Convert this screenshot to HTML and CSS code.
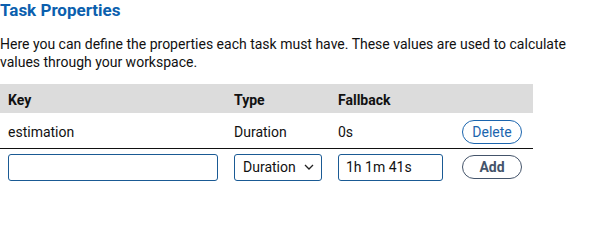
FILE: index.html
```html
<!DOCTYPE html>
<html lang="en">
<head>
    <meta charset="UTF-8">
    <title>Task Properties</title>
    <link rel="stylesheet" href="styles.css">
</head>
<body>
    <h2 class="title">Task Properties</h2>
    <p class="intro">Here you can define the properties each task must have. These values are used to calculate values through your workspace.</p>

    <table class="props">
        <colgroup>
            <col class="col-key">
            <col class="col-type">
            <col class="col-fallback">
            <col class="col-action">
        </colgroup>
        <thead>
            <tr>
                <th>Key</th>
                <th>Type</th>
                <th>Fallback</th>
                <th></th>
            </tr>
        </thead>
        <tbody>
            <tr class="existing">
                <td>estimation</td>
                <td>Duration</td>
                <td>0s</td>
                <td><button class="pill delete">Delete</button></td>
            </tr>
            <tr class="new-row">
                <td><input type="text" class="field key-field"></td>
                <td>
                    <div class="select-box">
                        <span>Duration</span>
                        <svg width="10" height="6" viewBox="0 0 10 6"><path d="M1 1l4 4 4-4" fill="none" stroke="#222" stroke-width="1.3"/></svg>
                    </div>
                </td>
                <td><input type="text" class="field fallback-field" value="1h 1m 41s"></td>
                <td><button class="pill add">Add</button></td>
            </tr>
        </tbody>
    </table>
</body>
</html>
```

FILE: styles.css
```css
body {
    margin: 0;
    font-family: Roboto, "Liberation Sans", sans-serif;
    font-size: 14px;
    color: #111;
    background: #fff;
}
.title {
    margin: 0;
    font-size: 17px;
    line-height: 20px;
    font-weight: bold;
    color: #0b5fae;
}
.intro {
    margin: 15px 0 0 0;
    line-height: 18px;
    width: 580px;
}

/* テーブル */
.props {
    margin-top: 13px;
    border-collapse: collapse;
    table-layout: fixed;
    width: 533px;
}
.col-key { width: 226px; }
.col-type { width: 104px; }
.col-fallback { width: 124px; }
.col-action { width: 79px; }

.props th {
    background: #dcdcdc;
    text-align: left;
    font-weight: bold;
    height: 27px;
    padding: 2px 8px 0 8px;
}
.props td {
    padding: 0 8px;
}
.existing td {
    height: 33px;
    padding-top: 2px;
    border-bottom: 1px solid #111;
}
.new-row td {
    height: 36px;
}

.field {
    box-sizing: border-box;
    width: 100%;
    height: 27px;
    border: 1px solid #1a5a94;
    border-radius: 3px;
    font-family: inherit;
    font-size: 14px;
    padding: 0 7px;
    color: #111;
    display: block;
}
.key-field { width: 210px; }
.fallback-field { width: 105px; }

.select-box {
    box-sizing: border-box;
    width: 88px;
    height: 27px;
    border: 1px solid #1a5a94;
    border-radius: 3px;
    display: flex;
    align-items: center;
    justify-content: space-between;
    padding: 0 7px 0 8px;
}

/* ボタン */
.pill {
    box-sizing: border-box;
    width: 60px;
    height: 24px;
    border-radius: 12px;
    background: #fff;
    font-family: inherit;
    font-size: 14px;
    padding: 0;
    cursor: pointer;
}
.delete {
    border: 1px solid #1b65ae;
    color: #1b65ae;
}
.add {
    border: 1px solid #44546a;
    color: #44546a;
    font-weight: bold;
}
```
